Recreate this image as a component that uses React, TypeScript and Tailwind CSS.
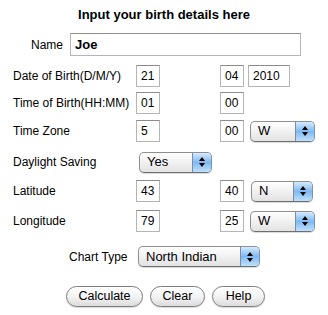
import React from 'react';

const font = { fontFamily: '"Liberation Sans", Arial, sans-serif' };

function TextBox({ value, w = 'w-[24px]', bold = false }: { value: string; w?: string; bold?: boolean }) {
  return (
    <div
      className={`${w} h-[22px] border border-[#b5b5b5] border-t-[#8c8c8c] bg-white flex items-center pl-[4px] text-black ${
        bold ? 'text-[13px] font-bold' : 'text-[12px]'
      }`}
    >
      {value}
    </div>
  );
}

function Spinner() {
  return (
    <div className="w-[19px] h-full flex flex-col items-center justify-center gap-[2px] bg-gradient-to-b from-[#d6eafd] via-[#7fb9f2] to-[#bfe0fb] border-l border-[#6f8fb8]">
      <div className="w-0 h-0 border-l-[3px] border-r-[3px] border-b-[4px] border-l-transparent border-r-transparent border-b-black" />
      <div className="w-0 h-0 border-l-[3px] border-r-[3px] border-t-[4px] border-l-transparent border-r-transparent border-t-black" />
    </div>
  );
}

function Select({ value, w }: { value: string; w: string }) {
  return (
    <div
      className={`${w} h-[21px] rounded-[5px] border border-[#8f8f8f] border-b-[#6e6e6e] overflow-hidden flex bg-gradient-to-b from-white via-[#f1f1f1] to-[#e2e2e2] shadow-[0_1px_1px_rgba(0,0,0,0.15)]`}
    >
      <div className="flex-1 flex items-center pl-[7px] text-[13px] text-black">{value}</div>
      <Spinner />
    </div>
  );
}

function Button({ label, w }: { label: string; w: string }) {
  return (
    <div
      className={`${w} h-[21px] rounded-full border border-[#7d7d7d] bg-gradient-to-b from-white via-[#f3f3f3] to-[#dcdcdc] flex items-center justify-center text-[12.5px] text-black shadow-[0_1px_1px_rgba(0,0,0,0.15)]`}
    >
      {label}
    </div>
  );
}

function Row({ label, mt, children }: { label: string; mt: string; children: React.ReactNode }) {
  return (
    <div className={`flex items-center h-[22px] ${mt}`}>
      <div className="w-[136px] pl-[13px] text-[12px] text-black whitespace-nowrap">{label}</div>
      {children}
    </div>
  );
}

export default function App() {
  return (
    <div className="w-[328px] h-[315px] bg-white overflow-hidden flex flex-col" style={font}>
      <div className="mt-[6px] h-[18px] leading-[18px] text-center text-[13px] font-bold text-black">
        Input your birth details here
      </div>

      {/* Name */}
      <div className="flex items-center h-[23px] mt-[9px]">
        <div className="w-[64px] text-right text-[12px] text-black pr-[1px]">Name</div>
        <div className="ml-[6px] w-[231px] h-[23px] border border-[#b5b5b5] border-t-[#8c8c8c] bg-white flex items-center pl-[4px] text-[13px] font-bold text-black">
          Joe
        </div>
      </div>

      <Row label="Date of Birth(D/M/Y)" mt="mt-[9px]">
        <TextBox value="21" />
        <div className="ml-[60px]"><TextBox value="04" /></div>
        <div className="ml-[4px]"><TextBox value="2010" w="w-[42px]" /></div>
      </Row>

      <Row label="Time of Birth(HH:MM)" mt="mt-[5px]">
        <TextBox value="01" />
        <div className="ml-[60px]"><TextBox value="00" /></div>
      </Row>

      <Row label="Time Zone" mt="mt-[6px]">
        <TextBox value="5" />
        <div className="ml-[60px]"><TextBox value="00" /></div>
        <div className="ml-[6px]"><Select value="W" w="w-[65px]" /></div>
      </Row>

      <Row label="Daylight Saving" mt="mt-[9px]">
        <div className="ml-[3px]"><Select value="Yes" w="w-[73px]" /></div>
      </Row>

      <Row label="Latitude" mt="mt-[7px]">
        <TextBox value="43" />
        <div className="ml-[60px]"><TextBox value="40" /></div>
        <div className="ml-[7px]"><Select value="N" w="w-[62px]" /></div>
      </Row>

      <Row label="Longitude" mt="mt-[8px]">
        <TextBox value="79" />
        <div className="ml-[60px]"><TextBox value="25" /></div>
        <div className="ml-[6px]"><Select value="W" w="w-[65px]" /></div>
      </Row>

      {/* Chart Type */}
      <div className="flex items-center h-[21px] mt-[14px]">
        <div className="w-[138px] pl-[69px] text-[12px] text-black whitespace-nowrap">Chart Type</div>
        <Select value="North Indian" w="w-[122px]" />
      </div>

      {/* Buttons */}
      <div className="flex items-center h-[21px] mt-[19px] pl-[66px] gap-[7px]">
        <Button label="Calculate" w="w-[77px]" />
        <Button label="Clear" w="w-[55px]" />
        <Button label="Help" w="w-[53px]" />
      </div>
    </div>
  );
}
